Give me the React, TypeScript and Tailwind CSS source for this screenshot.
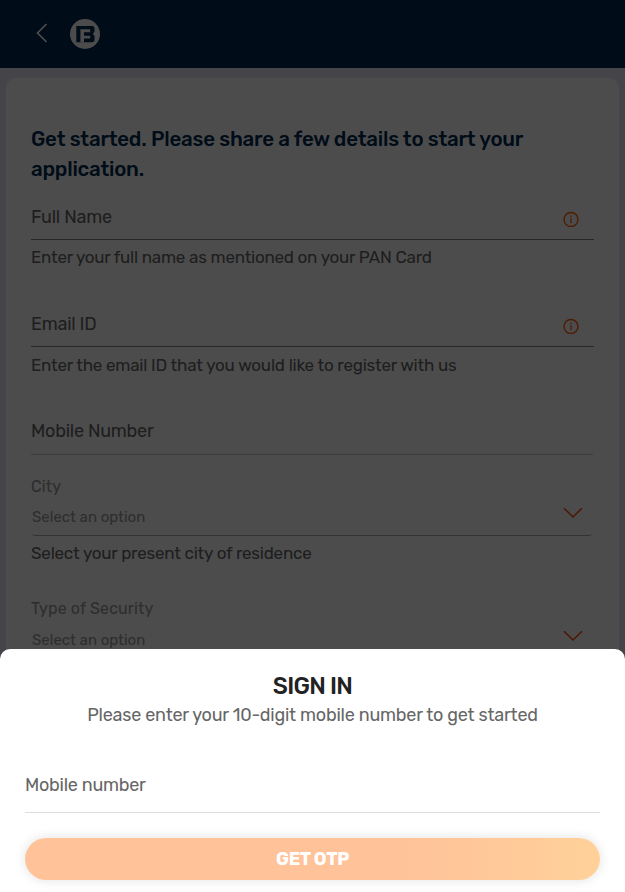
import React from "react";

function InfoIcon() {
  return (
    <svg className="mr-[14.8px] mt-2.5 h-4 w-4 shrink-0" viewBox="0 0 16 16" fill="none" stroke="#ff5c00">
      <circle cx="8" cy="8.5" r="7" strokeWidth="1.4" />
      <path d="M8 7V12.3M8 4.6V6" strokeWidth="1.3" />
    </svg>
  );
}

function ChevronDown() {
  return (
    <svg className="mb-2 mr-[9px] h-3 w-5 shrink-0" viewBox="0 0 20 12" fill="none" stroke="#ff4a00" strokeWidth="1.5">
      <path d="M1 1.2L10 10L19 1.2" />
    </svg>
  );
}

function Logo() {
  return (
    <svg className="ml-[22px] h-[30px] w-[30px]" viewBox="0 0 30 30">
      <circle cx="15" cy="15" r="15" fill="#fff" />
      <path
        d="M6.3 7H22Q24.5 7 24.5 9.5V12.5L22.8 15L24.5 17V21Q24.5 23.3 22 23.3H6.3Z"
        fill="#002953"
      />
      <path d="M10.4 10.3H20.2V13.3H14V16.7H20.2V19.6H14V23.5H10.4Z" fill="#fff" />
    </svg>
  );
}

export default function App() {
  return (
    <div className="relative h-[892px] w-[625px] overflow-hidden bg-[#e6e8f5] font-[Rubik,Roboto,sans-serif] text-[#666]">
      <header className="flex h-[68px] items-center bg-[#002953] pl-9">
        <svg className="-mt-0.5 h-5 w-3" viewBox="0 0 12 20" fill="none" stroke="#fff" strokeWidth="1.7">
          <path d="M10.5 1L1.5 10L10.5 19" />
        </svg>
        <Logo />
      </header>
      <main className="mx-1.5 mt-2.5 h-[814px] rounded-[10px] bg-white pl-[25px] pr-[25px] pt-[46px]">
        <h1 className="h-[77px] text-[20.5px] font-medium leading-[30px] tracking-[-0.23px] text-[#002953]">
          <span className="whitespace-nowrap">Get started. Please share a few details to start your</span>
          <br />
          application.
        </h1>
        <section className="h-[107px]">
          <div className="flex h-[39px] w-[563px] justify-between border-b border-[#888]">
            <label className="text-[18px] leading-[32px] tracking-[-0.23px]">Full Name</label>
            <InfoIcon />
          </div>
          <p className="text-[17px] leading-[35px] tracking-[-0.24px]">Enter your full name as mentioned on your PAN Card</p>
        </section>
        <section className="h-[107px]">
          <div className="flex h-[39px] w-[563px] justify-between border-b border-[#888]">
            <label className="text-[18px] leading-[32px] tracking-[-0.23px]">Email ID</label>
            <InfoIcon />
          </div>
          <p className="text-[17px] leading-[37px] tracking-[-0.22px]">Enter the email ID that you would like to register with us</p>
        </section>
        <section className="h-[40px] w-[562px] border-b border-[#ccc] text-[18px] leading-[32px] tracking-[-0.23px]">Mobile Number</section>
        <section className="h-[122px] pt-5">
          <p className="text-base leading-6 tracking-[0.12px] text-[#999]">City</p>
          <div className="ml-px flex h-[37px] w-[560px] items-center justify-between rounded-b-[3px] border-b border-[#aaa]">
            <span className="text-[15px] text-[#999]">Select an option</span>
            <ChevronDown />
          </div>
          <p className="text-[17px] leading-[35px] tracking-[-0.22px]">Select your present city of residence</p>
        </section>
        <section className="pt-5">
          <p className="text-base leading-6 tracking-[0.12px] text-[#999]">Type of Security</p>
          <div className="ml-px flex h-[38px] w-[560px] items-center justify-between">
            <span className="text-[15px] text-[#999]">Select an option</span>
            <ChevronDown />
          </div>
        </section>
      </main>
      <div className="absolute inset-0 flex flex-col justify-end bg-black/70">
        <section className="h-[243px] rounded-t-[10px] bg-white px-[25px] pt-[21px]">
          <h2 className="text-center text-[23.5px] font-medium leading-8 tracking-[-0.7px] text-[#222]">SIGN IN</h2>
          <p className="mt-px text-center text-[18px] leading-6 tracking-[-0.23px]">Please enter your 10-digit mobile number to get started</p>
          <div className="mt-[42px] h-[44px] border-b border-[#ddd] text-[18px] leading-8 tracking-[-0.26px]">Mobile number</div>
          <button className="mt-[25px] flex h-[42px] w-full items-center justify-center rounded-full bg-gradient-to-r from-[#ffc299] from-65% to-[#ffd199] text-lg font-bold tracking-[-0.35px] text-white shadow-[0_0_12px_rgba(0,0,0,0.12)]">
            GET OTP
          </button>
        </section>
      </div>
    </div>
  );
}
